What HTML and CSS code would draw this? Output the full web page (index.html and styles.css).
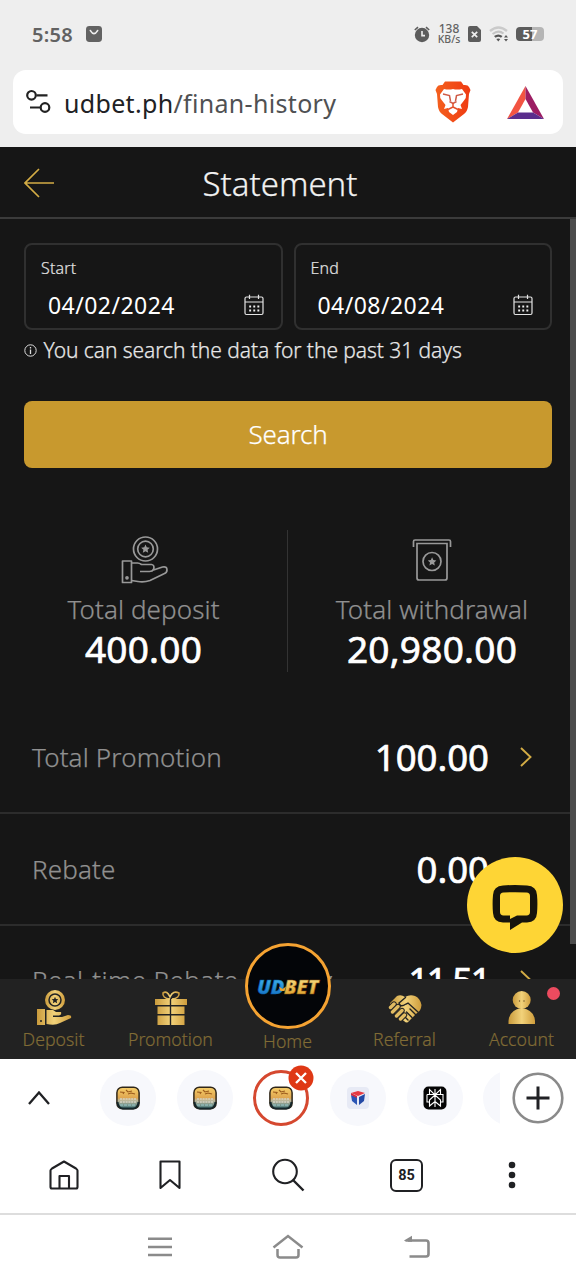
FILE: index.html
```html
<!DOCTYPE html>
<html lang="en">
<head>
<meta charset="utf-8">
<title>Statement</title>
<link rel="stylesheet" href="styles.css">
</head>
<body>
<svg class="defs" width="0" height="0" aria-hidden="true">
  <defs>
    <linearGradient id="gold" x1="0" x2="1"><stop offset="0" stop-color="#c99a3c"/><stop offset=".5" stop-color="#f2d27a"/><stop offset="1" stop-color="#cf9d3c"/></linearGradient>
    <linearGradient id="lion" x1="0" x2="1"><stop offset="0" stop-color="#f4611e"/><stop offset="1" stop-color="#ef3a12"/></linearGradient>
    <linearGradient id="coin" x2="0" y2="1"><stop offset="0" stop-color="#f7cf69"/><stop offset=".5" stop-color="#dfa650"/><stop offset=".6" stop-color="#c0b89a"/><stop offset="1" stop-color="#3f777d"/></linearGradient>
    <linearGradient id="blue" x2="0" y2="1"><stop offset="0" stop-color="#4cc6f6"/><stop offset="1" stop-color="#0c63bd"/></linearGradient>
    <linearGradient id="yellow" x2="0" y2="1"><stop offset="0" stop-color="#fff0a0"/><stop offset="1" stop-color="#d79317"/></linearGradient>
    <symbol id="star" viewBox="0 0 10 10"><path d="M5 .3 6.4 3.4 9.8 3.8 7.3 6.1 8 9.5 5 7.8 2 9.5 2.7 6.1.2 3.8 3.6 3.4Z"/></symbol>
    <symbol id="calendar" viewBox="0 0 20 22"><g fill="none" stroke="#e4e4e4" stroke-width="1.2"><rect x="1" y="3" width="18" height="17.5" rx="1.5"/><path d="M1 8H19M5.5.8V5M14.5.8V5"/></g><path d="M5.2 12.5H15.5M5.2 16.5H15.5" stroke="#f0f0f0" stroke-width="1.9" stroke-dasharray="1.9 2.2"/></symbol>
    <symbol id="favicon" viewBox="0 0 24 24"><rect x=".9" y="1.200" width="22.200" height="21.600" rx="5.500" fill="url(#coin)" stroke="#302719" stroke-width="1.500"/><path d="M4 6 8 6.500 7 8M10 4 12 6 16 5M12 8 15 7 19 8" fill="none" stroke="#9a5a1c" stroke-width="1.100"/><path d="M4 13H20M4 16H20" stroke="#d5d2c4" stroke-width="1.500" stroke-dasharray="2 .8"/><path d="M4 19H20" stroke="#8fb6b5" stroke-width="1.500" stroke-dasharray="3 1"/><path d="M1.500 16Q2 22.300 7 22.500H17Q22 22.300 22.500 16" fill="none" stroke="#15262a" stroke-width="2"/></symbol>
  </defs>
</svg>
<div class="phone">
  <header class="status">
    <div class="status-left"><span class="clock">5:58</span>
      <svg width="16" height="16" viewBox="0 0 16 16"><rect width="16" height="16" rx="3.4" fill="#626262"/><path d="M4.400 4.600Q8 10.500 11.600 4.600" fill="none" stroke="#eee" stroke-width="1.700" stroke-linecap="round"/></svg>
    </div>
    <div class="status-right">
      <svg width="16" height="17" viewBox="0 0 16 17"><circle cx="8" cy="9" r="7.2" fill="#5c5c5c"/><path d="M.8 4 4 1.200M15.200 4 12 1.200" stroke="#5c5c5c" stroke-width="1.600"/><path d="M8 5V9.600H11" fill="none" stroke="#eee" stroke-width="1.600"/></svg>
      <div class="speed"><b>138</b><span>KB/s</span></div>
      <svg width="13" height="16" viewBox="0 0 13 16"><path d="M2 0H9L13 4V14Q13 16 11 16H2Q0 16 0 14V2Q0 0 2 0Z" fill="#5c5c5c"/><path d="M3.800 5.800 9.200 11.200M9.200 5.800 3.800 11.200" stroke="#eee" stroke-width="1.700"/></svg>
      <svg class="wifi" width="20" height="16" viewBox="0 0 20 16"><path d="M1 5Q9.500-2 18 5" fill="none" stroke="#cacaca" stroke-width="2.300"/><path d="M3.600 8Q9.500 3.400 14.500 7.600" fill="none" stroke="#c4c4c4" stroke-width="2"/><path d="M5 10Q9.300 7 13.500 10L12 11.700Q9.300 10 6.600 11.700ZM7.300 13Q9.300 12.200 11.300 13L9.300 15.500Z" fill="#555"/><path d="M17 9 19 11.500H15ZM17 15.500 19 13H15Z" fill="#555"/></svg>
      <div class="battery"><span>57</span></div>
    </div>
  </header>
  <div class="address">
    <svg width="26" height="26" viewBox="0 0 26 26" fill="none" stroke="#222" stroke-width="2.200"><circle cx="6.500" cy="6.300" r="4.300"/><path d="M11.500 6.300H22.500M5 18.500H15.500"/><circle cx="20" cy="18.500" r="4.300"/></svg>
    <div class="url">udbet.ph<span>/finan-history</span></div>
    <svg class="brave" width="36" height="42" viewBox="0 0 36 42"><path d="M10 .5H26L28.500 4Q33 3.500 34 6L35.500 9 34 13 33 26Q32 31 29 33L18 41.500 7 33Q4 31 3 26L2 13 .5 9 2 6Q3 3.500 7.500 4Z" fill="url(#lion)"/><path d="M9 8Q14 9 18 8 22 9 27 8L31 13.500Q31.500 17 29 19.500L25.500 24 27 28 23 27 22 31 18 34 14 31 13 27 9 28 10.500 24 7 19.500Q4.500 17 5 13.500Z" fill="#fff"/><path d="M8 13 14.500 14.500 15.500 20M28 13 21.500 14.500 20.500 20M14.500 20.500 18 22.500 21.500 20.500" fill="none" stroke="#cf5a45" stroke-width="1.500"/><path d="M18 22V26L13 28.500M18 26 23 28.500" fill="none" stroke="#e3532f" stroke-width="1.500"/></svg>
    <svg width="37" height="33" viewBox="0 0 37 33"><path d="M18.500 0 0 33 11 26.500 18.500 13Z" fill="#f25442"/><path d="M18.500 0 37 33 26 26.500 18.500 13Z" fill="#9c1d63"/><path d="M0 33H37L26 26.500H11Z" fill="#5a2d8c"/></svg>
  </div>

  <main class="site">
    <div class="titlebar">
      <svg width="30" height="30" viewBox="0 0 30 30" fill="none" stroke="#d3ac45" stroke-width="1.700"><path d="M15 1 1 15 15 29M1 15H30"/></svg>
      <h1>Statement</h1>
    </div>
    <div class="scroll">
      <div class="content">
        <div class="dates">
          <div class="field"><label>Start</label><div class="date"><span>04/02/2024</span><svg width="20" height="22"><use href="#calendar"/></svg></div></div>
          <div class="field"><label>End</label><div class="date"><span>04/08/2024</span><svg width="20" height="22"><use href="#calendar"/></svg></div></div>
        </div>
        <div class="note"><svg width="13" height="13" viewBox="0 0 13 13" fill="none" stroke="#ddd"><circle cx="6.500" cy="6.500" r="5.700"/><path d="M6.500 5.500V10M6.500 3V4.400" stroke-width="1.300"/></svg><span>You can search the data for the past 31 days</span></div>
        <button class="search">Search</button>
        <div class="totals">
          <div class="total">
            <svg width="48" height="50" viewBox="0 0 48 50" fill="none" stroke="#999" stroke-width="1.700" stroke-linejoin="round"><circle cx="25.500" cy="14" r="12"/><circle cx="25.500" cy="14" r="7.800"/><use href="#star" x="21" y="9.300" width="9" height="9" fill="#999" stroke="none"/><rect x="2.500" y="26" width="9" height="21.500"/><path d="M11.500 28H17.500Q19.500 28 21.500 29.500H31.500Q35 30 33.500 34.500 32.500 36.500 29.500 36.500H20M33.500 35 42.500 32Q47 31 47 35 47 38 43.500 39L30 45.500Q24 47.500 18 46.500L11.500 45.500"/><circle cx="7" cy="42.800" r="1"/></svg>
            <p>Total deposit</p><strong>400.00</strong>
          </div>
          <div class="total">
            <svg width="40" height="50" viewBox="0 0 40 50" fill="none" stroke="#999" stroke-width="1.700"><path d="M1.500 12V6.500Q1.500 5 3 5H37Q38.500 5 38.500 6.500V12"/><path d="M5 8.500H35V43Q35 45 33 45H7Q5 45 5 43Z"/><circle cx="20" cy="26.500" r="9"/><use href="#star" x="15.600" y="22" width="9" height="9" fill="#999" stroke="none"/></svg>
            <p>Total withdrawal</p><strong>20,980.00</strong>
          </div>
        </div>
      </div>
      <div class="row"><span>Total Promotion</span><strong>100.00</strong><svg width="12" height="20" viewBox="0 0 12 20"><path d="M1 1 10.500 10 1 19" fill="none" stroke="#d3ac45" stroke-width="1.900"/></svg></div>
      <div class="row"><span>Rebate</span><strong>0.00</strong><svg width="12" height="20" viewBox="0 0 12 20"><path d="M1 1 10.500 10 1 19" fill="none" stroke="#d3ac45" stroke-width="1.900"/></svg></div>
      <div class="row realtime"><span>Real-time Rebate History</span><strong>11.51</strong><svg width="12" height="20" viewBox="0 0 12 20"><path d="M1 1 10.500 10 1 19" fill="none" stroke="#d3ac45" stroke-width="1.900"/></svg></div>
      <i class="scrollbar"></i>
    </div>
    <nav class="bottom-nav">
      <a><svg width="36" height="36" viewBox="0 0 36 36"><circle cx="19" cy="10" r="10" fill="url(#gold)"/><circle cx="19" cy="10" r="6" fill="none" stroke="#222" stroke-width="1.500"/><use href="#star" x="15.500" y="6.500" width="7" height="7" fill="#222"/><path d="M1 19H9V35H1ZM10.500 20H17L20 22H25Q26 25 23 25.500H17V27H26L32 25Q36 25 35 28L24 33Q19 36 10.500 34Z" fill="url(#gold)"/><circle cx="5" cy="31" r="1" fill="#222"/></svg><span>Deposit</span></a>
      <a><svg width="34" height="36" viewBox="0 0 34 36"><path d="M16 9Q8 8 9 3 13 0 16 7 19 0 25 3 26 8 18 9" fill="none" stroke="url(#gold)" stroke-width="1.600"/><path d="M1 9H15.800V15H1ZM17.200 9H33V15H17.200ZM3.500 16.500H15.800V24H3.500ZM17.200 16.500H30.500V24H17.200ZM3.500 25.500H15.800V35H3.500ZM17.200 25.500H30.500V35H17.200Z" fill="url(#gold)"/></svg><span>Promotion</span></a>
      <a class="home"><svg class="logo" width="86" height="86" viewBox="0 0 86 86"><circle cx="43" cy="43" r="41.500" fill="#030508" stroke="#f5a332" stroke-width="3"/><text x="12" y="50.500"><tspan fill="url(#blue)" stroke="#075c9c" stroke-width=".5">UD</tspan><tspan fill="url(#yellow)" stroke="#885713" stroke-width=".5">BET</tspan></text><path d="M34 43.500 37.500 46 41 43.500 39.500 48 35.500 48Z" fill="#e9a52e"/></svg><span>Home</span></a>
      <a><svg class="shake" width="34" height="30" viewBox="0 0 34 30"><path d="M2 9 9 2Q13 0 17 3 22 0 27 2Q32 4 33.500 11 33 17 29 19L21 27Q19 30 16 27L9 22 2 13Z" fill="url(#gold)"/><path d="M17.500 3.500 11 9Q12 14 18 10L20 9 30 18M22 15 27.500 20.500M18.500 18 24 23.500M15 21 20 26" fill="none" stroke="#222" stroke-width="1.400" stroke-linecap="round"/><path d="M2.500 13.500 6 10M4.500 18 10 12.500M8.500 22 14 16.500M12.500 25 16.500 21" stroke="#222" stroke-width="5.400" stroke-linecap="round"/><path d="M2.500 13.500 6 10M4.500 18 10 12.500M8.500 22 14 16.500M12.500 25 16.500 21" stroke="#e2bc62" stroke-width="3.400" stroke-linecap="round"/></svg><span>Referral</span></a>
      <a class="account"><svg width="28" height="35" viewBox="0 0 28 35"><circle cx="13.700" cy="10" r="9" fill="url(#gold)"/><path d="M.5 34V31Q1 20 13.700 18 26.500 20 27 31V34Z" fill="url(#gold)"/><circle cx="11.500" cy="11" r=".7" fill="#654d23"/><circle cx="16" cy="11" r=".7" fill="#654d23"/></svg><i></i><span>Account</span></a>
    </nav>
    <div class="chat"><svg width="46" height="46" viewBox="0 0 46 46"><path fill="#16140d" fill-rule="evenodd" d="M11 1.500Q23 .5 35 1.500Q44.500 2 45 11Q45.800 20 45 29Q44.500 38 35 38.500H30L18 46V38.500H11Q1.500 38 1 29Q.2 20 1 11Q1.500 2 11 1.500ZM11.500 8.500Q8 8.700 8 12V28Q8 31.300 11.500 31.500H18V35L25 31.500H34.500Q38 31.300 38 28V12Q38 8.700 34.500 8.500Q23 8 11.500 8.500Z"/></svg></div>
  </main>

  <section class="tabs">
    <svg width="22" height="14" viewBox="0 0 22 14" fill="none" stroke="#202124" stroke-width="2.300"><path d="M1 13 11 1.500 21 13"/></svg>
    <div class="strip">
      <div class="tab"><svg width="24" height="24"><use href="#favicon"/></svg></div>
      <div class="tab"><svg width="24" height="24"><use href="#favicon"/></svg></div>
      <div class="tab active"><svg width="24" height="24"><use href="#favicon"/></svg><svg class="close" width="26" height="26" viewBox="0 0 26 26"><circle cx="13" cy="13" r="12.500" fill="#df3815"/><path d="M8 8 18 18M18 8 8 18" stroke="#fff" stroke-width="2.300"/></svg></div>
      <div class="tab"><svg width="22" height="22" viewBox="0 0 22 22"><rect width="22" height="22" rx="4" fill="#e7eaf5"/><path d="M4 6 11 4 18 6 11 9Z" fill="#e63b43"/><path d="M4 8 10 10V18L5 14Z" fill="#2a55b5"/><path d="M12 10 18 7 17 14 12 18Z" fill="#2349a5"/><path d="M4 6 10 9V11L4 8Z" fill="#d5293c"/></svg></div>
      <div class="tab"><svg width="24" height="24" viewBox="0 0 24 24"><rect x=".5" y=".5" width="23" height="23" rx="5" fill="#050505"/><path d="M12 3V21M6.500 8V3.500L12 9 17.500 3.500V8M4 8.500H20V16H17.500M4 8.500V16H6.500M12 9 6.500 14V20L12 15.500 17.500 20V14Z" fill="none" stroke="#fff" stroke-width="1.100"/></svg></div>
      <div class="tab"></div>
    </div>
    <svg width="52" height="52" viewBox="0 0 52 52" fill="none"><circle cx="26" cy="26" r="24.300" stroke="#8a8a8a" stroke-width="2.600"/><path d="M14.500 26H37.500M26 14.500V37.500" stroke="#202124" stroke-width="3"/></svg>
  </section>
  <section class="tools">
    <svg width="30" height="30" viewBox="0 0 30 30" fill="none" stroke="#202124" stroke-width="2.100" stroke-linejoin="round"><path d="M1.500 10.500Q1.500 9.500 3 8.500L15 1.500 27 8.500Q28.500 9.500 28.500 10.500V27Q28.500 28.500 27 28.500H3Q1.500 28.500 1.500 27ZM10.500 28V16H20V28"/></svg>
    <svg class="bookmark" width="22" height="30" viewBox="0 0 22 30" fill="none" stroke="#202124" stroke-width="2.100" stroke-linejoin="round"><path d="M1.500 1.500H20.500V28L11 20 1.500 28Z"/></svg>
    <svg width="34" height="34" viewBox="0 0 34 34" fill="none" stroke="#202124" stroke-width="2.100"><circle cx="14" cy="13.500" r="11.800"/><path d="M22 22 32.500 32.500" stroke-width="2.400"/></svg>
    <div class="count">85</div>
    <svg width="8" height="28" viewBox="0 0 8 28" fill="#202124"><circle cx="4" cy="4" r="3.300"/><circle cx="4" cy="14" r="3.300"/><circle cx="4" cy="24" r="3.300"/></svg>
  </section>
  <footer class="system">
    <svg width="24" height="20" viewBox="0 0 24 20" stroke="#8b8b8b" stroke-width="2.600"><path d="M0 1.700H24M0 10H24M0 18H24"/></svg>
    <svg width="32" height="26" viewBox="0 0 32 26" fill="none" stroke="#8b8b8b" stroke-width="2.500"><path d="M1.500 13.500 16 2 30.500 13.500M5.500 15V21Q5.500 23.500 8 23.500H24Q26.500 23.500 26.500 21V15"/></svg>
    <svg width="26" height="24" viewBox="0 0 26 24"><path d="M4 5.500H22Q24.500 5.500 24.500 8V19Q24.500 21.500 22 21.500H5.500" fill="none" stroke="#8b8b8b" stroke-width="2.600"/><path d="M0 5.500 8 .7V6.800H2Z" fill="#8b8b8b"/></svg>
  </footer>
</div>
</body>
</html>
```
FILE: styles.css
```css
* { box-sizing: border-box; }
body { margin: 0; background: #fff; font-family: "Noto Sans", "Open Sans", sans-serif; }
svg { display: block; flex: none; }
.defs { position: absolute; }
.phone { width: 576px; height: 1280px; display: flex; flex-direction: column; overflow: hidden; background: #eee; }
.status { height: 70px; padding: 0 32px; display: flex; justify-content: space-between; align-items: center; color: #626262; }
.status-left, .status-right { display: flex; align-items: center; height: 28px; margin-bottom: 2px; }
.status-left { gap: 13px; }
.clock { font-size: 20px; font-weight: 600; letter-spacing: .3px; }
.status-right { gap: 7.5px; }
.speed { width: 23px; display: flex; flex-direction: column; align-items: center; line-height: 10px; white-space: nowrap; }
.speed b { font-size: 12px; font-weight: 500; }
.speed span { font-size: 10.5px; font-weight: 500; }
.battery { width: 28px; height: 14px; border-radius: 4px; background: linear-gradient(90deg, #5c5c5c 57%, #b5b5b5 57%); color: #fff; font-size: 13px; line-height: 14px; font-weight: 700; text-align: center; }
.address { height: 64px; margin: 0 13px 13px; padding: 0 19px 0 12px; border-radius: 13px; background: #fff; display: flex; align-items: center; }
.url { flex: 1; margin: 2px 0 0 13px; font-size: 25px; line-height: 40px; letter-spacing: .32px; color: #202124; white-space: nowrap; }
.url span { color: #505153; }
.brave { margin-right: 36px; }
.site { position: relative; height: 912px; background: #161616; color: #fff; display: flex; flex-direction: column; }
.titlebar { height: 72px; border-bottom: 2px solid #3b3b3b; padding: 2px 24px 0; display: grid; grid-template-columns: 30px 1fr 46px; align-items: center; }
.titlebar h1 { margin: 2px 0 0; text-align: center; font-size: 33px; font-weight: 300; line-height: 44px; color: #f2f2f2; -webkit-text-stroke: .25px; }
.scroll { position: relative; height: 760px; overflow: hidden; }
.content { padding: 24px 24px 0; }
.dates { display: grid; grid-template-columns: 1fr 1fr; gap: 11px; }
.field { height: 87px; border: 2px solid #303030; border-radius: 8px; padding: 12px 17px 0 15px; }
.field label { display: block; font-size: 16px; line-height: 22px; font-weight: 300; letter-spacing: .15px; color: #e2e2e2; -webkit-text-stroke: .2px; }
.date { height: 32px; margin-top: 10px; padding-left: 7px; display: flex; align-items: center; justify-content: space-between; font-size: 23px; letter-spacing: .45px; }
.note { display: flex; align-items: center; gap: 6.5px; height: 32px; margin-top: 4px; font-size: 21px; font-weight: 300; letter-spacing: -.07px; color: #e8e8e8; white-space: nowrap; -webkit-text-stroke: .25px; }
.search { display: block; width: 528px; height: 67px; margin-top: 35px; padding: 0; border: 0; border-radius: 8px; background: #c8992e; color: #fff; font: 300 26px/67px "Noto Sans", sans-serif; letter-spacing: -.2px; -webkit-text-stroke: .25px; }
.totals { display: grid; grid-template-columns: 1fr 1fr; height: 139px; margin-top: 62px; }
.total { display: flex; flex-direction: column; align-items: center; padding-top: 5px; }
.total:first-child { border-right: 1px solid #333; padding-right: 24px; }
.total:last-child { padding-left: 24px; }
.total p { margin: 7px 0 0; font-size: 26px; line-height: 34px; font-weight: 300; letter-spacing: .1px; color: #909090; white-space: nowrap; -webkit-text-stroke: .25px; }
.total strong { font-size: 37px; line-height: 46px; font-weight: 400; letter-spacing: .25px; -webkit-text-stroke: .7px; }
.row { height: 112px; padding: 0 44px 0 32px; display: flex; align-items: center; border-bottom: 2px solid #2c2c2c; font-size: 26px; font-weight: 300; letter-spacing: .15px; color: #909090; white-space: nowrap; -webkit-text-stroke: .25px; }
.content + .row { margin-top: 33px; }
.row strong { margin: 0 31px 0 auto; font-size: 36.5px; font-weight: 400; line-height: 46px; letter-spacing: 0; color: #fff; -webkit-text-stroke: .7px; }
.row.realtime { letter-spacing: .4px; padding-bottom: 2px; }
.realtime strong { letter-spacing: -2.5px; }
.scrollbar { position: absolute; top: 0; right: 0; width: 6px; height: 725px; background: #4c4c4c; }
.bottom-nav { height: 80px; flex: none; background: #222; display: flex; align-items: flex-end; padding: 0 0 8px; }
.bottom-nav a { width: 117px; flex: none; height: 61px; display: flex; flex-direction: column; align-items: center; justify-content: space-between; }
.bottom-nav a:first-child { width: 112px; padding-right: 5px; }
.bottom-nav span { font-size: 17.7px; line-height: 24px; font-weight: 300; color: #806b35; -webkit-text-stroke: .2px; }
.bottom-nav .home { height: 108px; }
.logo { font: italic 900 20px "Noto Sans", sans-serif; letter-spacing: -.3px; position: relative; z-index: 1; }
.shake { margin-top: 4px; }
.account { position: relative; }
.account i { position: absolute; left: 84px; top: -3px; width: 13px; height: 13px; background: #ec4b5f; border-radius: 50%; }
.chat { position: absolute; left: 467px; top: 710px; width: 96px; height: 96px; border-radius: 50%; background: #fed535; display: flex; align-items: center; justify-content: center; padding-top: 3px; }
.tabs { height: 78px; background: #fff; display: flex; align-items: center; padding: 0 12px 0 28px; }
.strip { width: 450px; height: 78px; display: flex; align-items: center; gap: 20.7px; padding-left: 50px; overflow: hidden; margin-right: 12px; }
.tab { position: relative; width: 56px; height: 56px; flex: none; border-radius: 50%; background: #f7f8fc; display: flex; align-items: center; justify-content: center; }
.tab.active { background: #fff; border: 3px solid #d5482f; }
.close { position: absolute; right: -8px; top: -8px; }
.tools { height: 76px; background: #fff; padding: 0 60px 0 49px; display: flex; align-items: center; justify-content: space-between; }
.bookmark { margin: 0 5px 0 -5px; }
.count { width: 33px; height: 33px; border: 2.5px solid #202124; border-radius: 6px; display: flex; align-items: center; justify-content: center; font: 700 14.5px Roboto, sans-serif; color: #202124; }
.system { height: 67px; border-top: 2px solid #ddd; background: #fff; padding: 0 146px 2px 148px; display: flex; align-items: center; justify-content: space-between; }
```
